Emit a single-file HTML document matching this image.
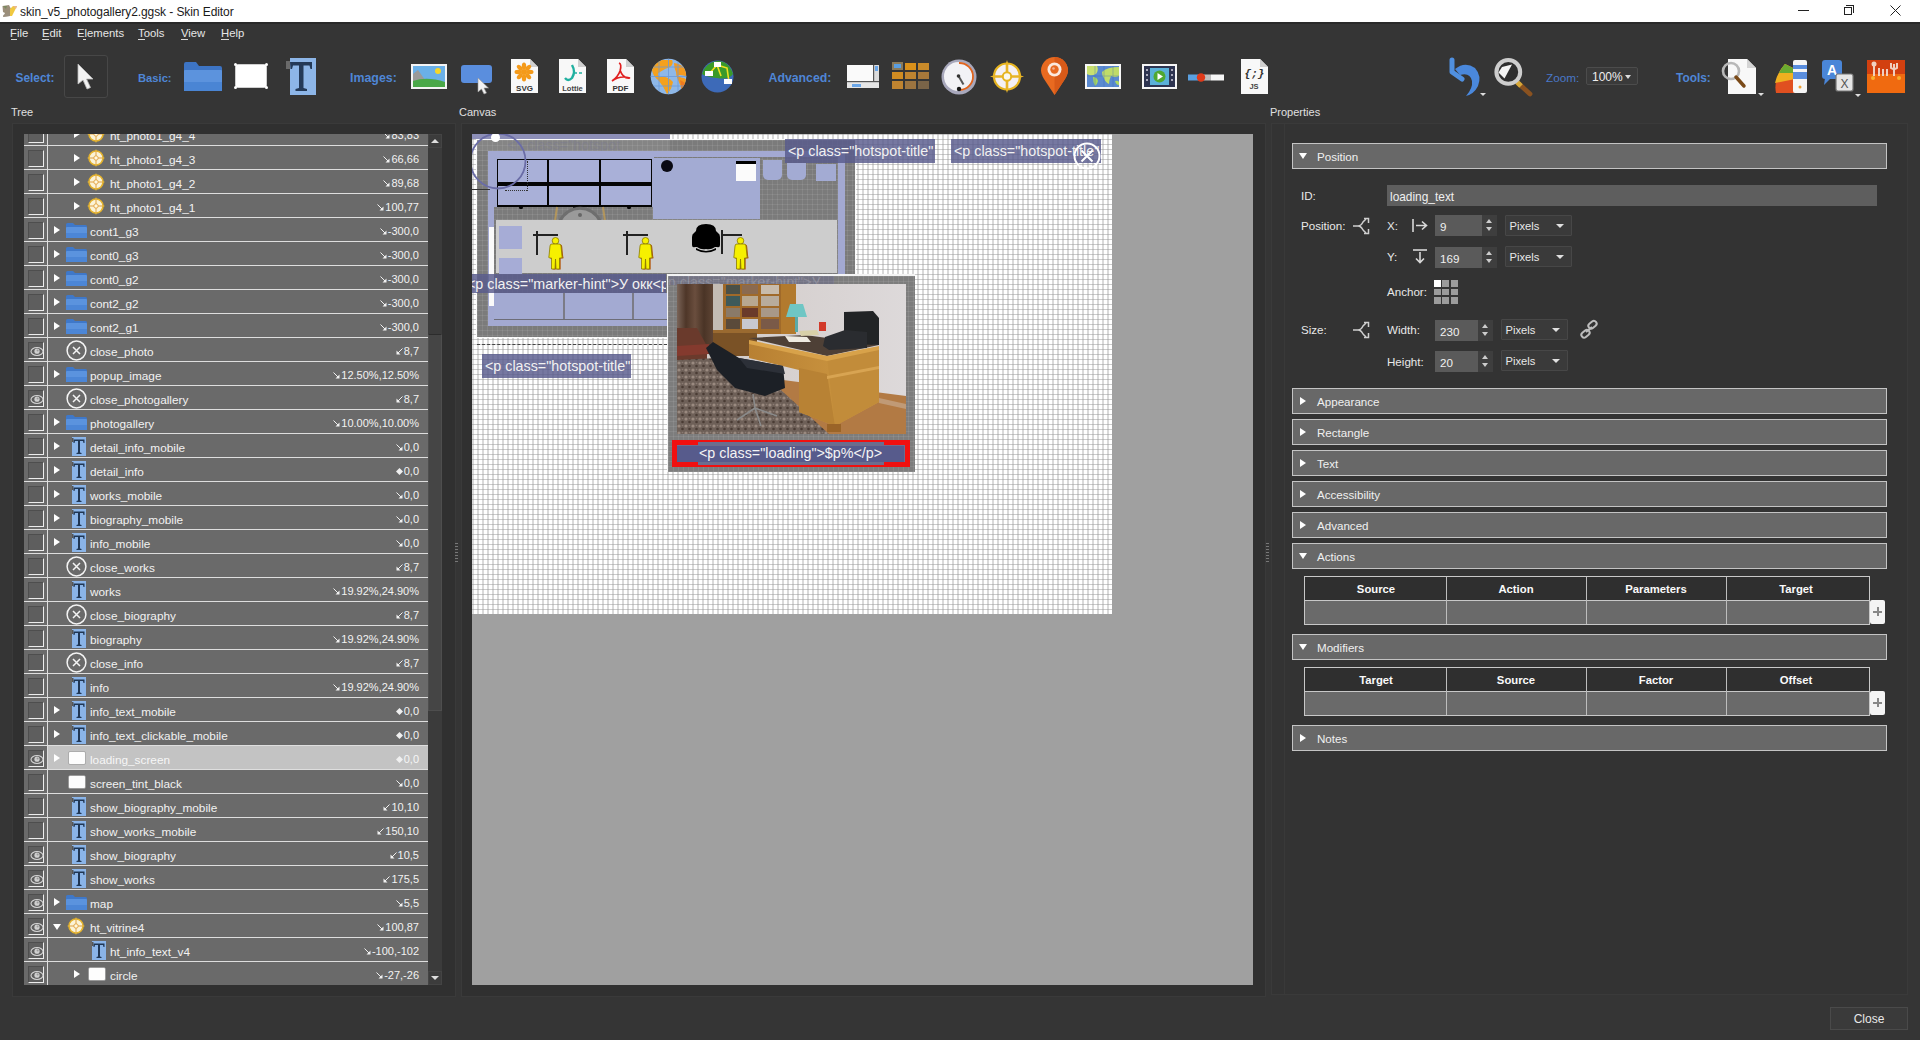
<!DOCTYPE html>
<html><head><meta charset="utf-8">
<style>
*{box-sizing:border-box;margin:0;padding:0}
html,body{width:1920px;height:1040px;overflow:hidden;background:#353535;font-family:"Liberation Sans",sans-serif;color:#e8e8e8}
.a{position:absolute}
svg.a{overflow:visible}
#title{left:0;top:0;width:1920px;height:22px;background:#fff;color:#1a1a1a;font-size:12px}
#menu{left:0;top:22px;width:1920px;height:22px;background:#353535;border-top:2px solid #292929;font-size:11.3px;color:#e6e6e6}
#menu span{position:absolute;top:3px}
#menu u{text-decoration:none;border-bottom:1px solid #e6e6e6;line-height:10px;display:inline-block}
.lbl{font-size:11px;color:#e0e0e0}
.tb{position:absolute;font-weight:bold;font-size:12.2px;color:#4f86d6;white-space:nowrap}
.frame{position:absolute;background:#303030;border:1px solid #3a3a3a}
/* tree */
#tree{left:24px;top:134px;width:404px;height:851px;overflow:hidden;background:#6a6a6a}
.row{position:absolute;left:0;width:404px;height:24px;border-bottom:1px solid #dedede;font-size:11.8px;color:#f2f2f2}
.row .cb{position:absolute;left:4px;top:4px;width:16px;height:16.5px;background:#5e5e5e;border-right:1.6px solid #ececec;border-bottom:1.6px solid #ececec;border-top:1.5px solid #4e4e4e;border-left:1.5px solid #4e4e4e}
.row .vl{position:absolute;left:23px;top:0;width:1px;height:24px;background:#dedede}
.row .t{position:absolute;top:7px;white-space:nowrap}
.row .v{position:absolute;right:9px;top:7px;white-space:nowrap;font-size:11px}
.row .ar{position:absolute;top:8px;width:0;height:0;border-top:4px solid transparent;border-bottom:4px solid transparent;border-left:6px solid #fff}
.row .ad{position:absolute;top:10px;width:0;height:0;border-left:4px solid transparent;border-right:4px solid transparent;border-top:6px solid #fff}
.row.sel{background:linear-gradient(90deg,#6a6a6a 24px,#c3c3c3 24px);color:#f6f6f6}
.sb{position:absolute;width:14px;height:14px;background:#3c3c3c;border:1px solid #444}
/* properties */
.hdr{position:absolute;left:1292px;width:595px;height:26px;background:#686868;border:1px solid #c4c4c4;font-size:11.6px;color:#f0f0f0}
.hdr span{position:absolute;left:24px;top:6px}
.hdr i{position:absolute;left:7px;top:8px;width:0;height:0;border-top:4px solid transparent;border-bottom:4px solid transparent;border-left:6px solid #fff}
.hdr i.d{left:6px;top:9px;border-left:4.5px solid transparent;border-right:4.5px solid transparent;border-top:6px solid #fff;border-bottom:0}
.pl{position:absolute;font-size:11.6px;color:#e8e8e8;white-space:nowrap}
.inp{position:absolute;background:#5a5a5a;height:21px;font-size:11.6px;color:#f0f0f0;padding:5px 0 0 5px;white-space:nowrap}
.spin{position:absolute;width:12px;height:21px;background:#444}
.combo{position:absolute;height:21px;background:#3a3a3a;border:1px solid #474747;font-size:11.2px;color:#e8e8e8;padding:4px 0 0 3.5px;border-radius:1px}
.combo:after{content:"";position:absolute;right:7px;top:8px;border-left:4px solid transparent;border-right:4px solid transparent;border-top:4px solid #e0e0e0}
.tbl{position:absolute;left:1304px;width:566px;height:49px;border:1px solid #c8c8c8;background:#6a6a6a}
.tbl .h{position:absolute;left:0;top:0;width:564px;height:24px;background:#2f2f2f;border-bottom:1px solid #c8c8c8}
.tbl .c{position:absolute;top:0;height:47px;width:1px;background:#bdbdbd}
.tbl .ht{position:absolute;top:6px;width:140px;text-align:center;font-weight:bold;font-size:11.3px;color:#fafafa}
.plus{position:absolute;left:1870px;width:15px;height:24px;background:#f4f4f4;border-radius:2px}
.plus:before{content:"";position:absolute;left:3px;top:11px;width:9px;height:1.5px;background:#888}
.plus:after{content:"";position:absolute;left:7px;top:7px;width:1.5px;height:9px;background:#888}
.hl{position:absolute;background:rgba(88,90,140,.82);color:#f2f2f2;font-size:14.3px;white-space:nowrap;overflow:hidden}
</style></head><body>
<div id="title" class="a">
  <svg class="a" style="left:1px;top:4px" width="17" height="14" viewBox="0 0 17 14"><path d="M1.5 2 L8 1 L10 5 L9 12 L2 13 L4 9 L2 8Z" fill="#8a7a62" opacity=".85"/><path d="M2 2 L6 2 L5 5Z" fill="#7a8a60"/><path d="M9 5 L12 2 L16 2 L11 12 L9 12Z" fill="#f0c840"/><path d="M12 2 L16 2 L15 5Z" fill="#e8b890"/><path d="M2 11 L8 9 L9 12 L2 13Z" fill="#9a9080" opacity=".7"/></svg>
  <span class="a" style="left:20px;top:5px;white-space:nowrap;letter-spacing:-0.08px">skin_v5_photogallery2.ggsk - Skin Editor</span>
  <div class="a" style="left:1798px;top:10px;width:11px;height:1px;background:#222"></div>
  <div class="a" style="left:1844px;top:7px;width:8px;height:8px;border:1px solid #222"></div>
  <div class="a" style="left:1846px;top:5px;width:8px;height:8px;border-top:1px solid #222;border-right:1px solid #222"></div>
  <svg class="a" style="left:1890px;top:5px" width="11" height="11" viewBox="0 0 11 11"><path d="M0.5 0.5 L10.5 10.5 M10.5 0.5 L0.5 10.5" stroke="#222" stroke-width="1"/></svg>
</div>
<div id="menu" class="a">
  <span style="left:10px">File</span><span style="left:42px">Edit</span><span style="left:77px">Elements</span><span style="left:138px">Tools</span><span style="left:181px">View</span><span style="left:221px">Help</span><div class="a" style="left:11px;top:15px;width:6px;height:1px;background:#d8d8d8"></div><div class="a" style="left:42px;top:15px;width:7px;height:1px;background:#d8d8d8"></div><div class="a" style="left:83px;top:15px;width:3px;height:1px;background:#d8d8d8"></div><div class="a" style="left:138px;top:15px;width:7px;height:1px;background:#d8d8d8"></div><div class="a" style="left:181px;top:15px;width:7px;height:1px;background:#d8d8d8"></div><div class="a" style="left:221px;top:15px;width:8px;height:1px;background:#d8d8d8"></div>
</div>

<div class="tb" style="left:15.5px;top:71px;font-size:11.9px">Select:</div>
<div class="a" style="left:64px;top:55px;width:44px;height:43px;border:1px solid #474747;border-radius:3px;background:#333"></div>
<svg class="a" style="left:77px;top:63px" width="20" height="28" viewBox="0 0 20 28"><path d="M1 1 L1 21 L6 17 L10 26 L13.5 24.5 L9.5 16 L16 16Z" fill="#f2f2f2" stroke="#bbb" stroke-width=".8"/></svg>
<div class="tb" style="left:138px;top:71.5px;font-size:11.2px">Basic:</div>
<svg class="a" style="left:184px;top:62px" width="38" height="29" viewBox="0 0 38 29"><path d="M0 2 Q0 0 2 0 H12 L15 4 H36 Q38 4 38 6 V27 Q38 29 36 29 H2 Q0 29 0 27Z" fill="#3d74c4"/><rect x="0" y="8" width="38" height="21" rx="1" fill="#5c93dd"/><rect x="0" y="20" width="38" height="9" fill="#4a85d4"/></svg>
<svg class="a" style="left:234px;top:63px" width="34" height="26" viewBox="0 0 34 26"><rect x="1.5" y="1.5" width="31" height="23" rx="2" fill="#fff" stroke="#ddd" stroke-width=".8"/><circle cx="1.5" cy="1.5" r="1.5" fill="#fff"/><circle cx="32.5" cy="1.5" r="1.5" fill="#fff"/><circle cx="1.5" cy="24.5" r="1.5" fill="#fff"/><circle cx="32.5" cy="24.5" r="1.5" fill="#fff"/></svg>
<svg class="a" style="left:286px;top:58px" width="30" height="37" viewBox="0 0 30 37"><rect x="4" y="0" width="26" height="37" fill="#8db6e8"/><rect x="0" y="3" width="4" height="8" fill="#6a6a6a"/><path d="M4 4 H26 V11 H24.5 L23.5 7.5 H17.5 V30 L21 31 V33 H9.5 V31 L13 30 V7.5 H7 L6 11 H4.5Z" fill="#243a58"/></svg>
<div class="tb" style="left:350px;top:71px;font-size:12.4px">Images:</div>
<svg class="a" style="left:411px;top:64px" width="36" height="25" viewBox="0 0 36 25"><rect x="0" y="0" width="36" height="25" fill="#f4f4f4"/><rect x="2" y="2" width="32" height="21" fill="#6ab0e8"/><circle cx="27" cy="7" r="3" fill="#f6d628"/><path d="M2 10 L7 6 L14 16 L2 20Z" fill="#9a9a9a"/><path d="M2 17 Q16 12 34 18 L34 23 L2 23Z" fill="#4aa848"/></svg>
<svg class="a" style="left:461px;top:65px" width="33" height="29" viewBox="0 0 33 29"><rect x="0" y="0" width="31" height="18" rx="3" fill="#5a8ede"/><path d="M17 13 L17 27 L20.5 24 L23 29 L25.5 28 L23 23 L27.5 23Z" fill="#f2f2f2" stroke="#999" stroke-width=".6"/></svg>
<svg class="a" style="left:510px;top:58px" width="29" height="36" viewBox="0 0 29 36"><path d="M1 1 H20 L28 9 V35 H1Z" fill="#f8f8f8"/><path d="M20 1 L28 9 H20Z" fill="#cfcfcf"/><g transform="translate(14 14)"><circle r="3" fill="#f49a1a"/><g fill="#f49a1a"><ellipse cx="0" cy="-6" rx="2.2" ry="3.5"/><ellipse cx="0" cy="6" rx="2.2" ry="3.5"/><ellipse cx="-6" cy="0" rx="3.5" ry="2.2"/><ellipse cx="6" cy="0" rx="3.5" ry="2.2"/><ellipse cx="4.2" cy="4.2" rx="2.2" ry="3.5" transform="rotate(-45 4.2 4.2)"/><ellipse cx="-4.2" cy="-4.2" rx="2.2" ry="3.5" transform="rotate(-45 -4.2 -4.2)"/><ellipse cx="4.2" cy="-4.2" rx="2.2" ry="3.5" transform="rotate(45 4.2 -4.2)"/><ellipse cx="-4.2" cy="4.2" rx="2.2" ry="3.5" transform="rotate(45 -4.2 4.2)"/></g></g><text x="14.5" y="33" font-size="8" font-weight="bold" text-anchor="middle" fill="#333" font-family="Liberation Sans">SVG</text></svg>
<svg class="a" style="left:558px;top:58px" width="29" height="36" viewBox="0 0 29 36"><path d="M1 1 H20 L28 9 V35 H1Z" fill="#f8f8f8"/><path d="M20 1 L28 9 H20Z" fill="#cfcfcf"/><path d="M14 7 Q18 14 14 20 Q10 24 7 20" fill="none" stroke="#20b0a0" stroke-width="2.4"/><path d="M16 15 H26" stroke="#20b0a0" stroke-width="1.6" stroke-dasharray="3 2"/><text x="14.5" y="33" font-size="7.5" font-weight="bold" text-anchor="middle" fill="#444" font-family="Liberation Sans">Lottie</text></svg>
<svg class="a" style="left:606px;top:58px" width="29" height="36" viewBox="0 0 29 36"><path d="M1 1 H20 L28 9 V35 H1Z" fill="#f8f8f8"/><path d="M20 1 L28 9 H20Z" fill="#cfcfcf"/><path d="M13 5 Q16 6 14 13 Q12 19 6 23 Q14 17 24 20 Q17 21 14 12" fill="none" stroke="#e02020" stroke-width="1.7"/><text x="14.5" y="33" font-size="8" font-weight="bold" text-anchor="middle" fill="#333" font-family="Liberation Sans">PDF</text></svg>
<svg class="a" style="left:650px;top:58px" width="37" height="37" viewBox="0 0 37 37"><defs><clipPath id="gc"><circle cx="18.5" cy="18.5" r="17.8"/></clipPath></defs><circle cx="18.5" cy="18.5" r="17.8" fill="#8fb8e8"/><g clip-path="url(#gc)"><path d="M2 12 Q4 4 12 2 L22 2 Q24 6 20 9 Q14 11 10 14 Q6 16 10 19 Q18 18 23 24 Q22 30 19 34 L17 36 Q12 26 8 22 Q3 18 2 12Z" fill="#f4a21e"/><path d="M24 5 Q32 6 36 12 L36 18 Q32 17 28 17 Q30 20 34 20 L37 22 L37 30 Q34 34 32 33 Q30 26 28 22 Q26 18 26 14 Q24 10 24 5Z" fill="#f49a20"/><path d="M30 22 Q34 24 36 26 L35 32 L32 33Z" fill="#ee7a22"/><path d="M0 18.5 H37 M18.5 0 V37 M0 9 H37 M0 28 H37 M9 0 V37 M28 0 V37" stroke="#6a98d8" stroke-width=".9" opacity=".85"/></g></svg>
<svg class="a" style="left:701px;top:60px" width="33" height="33" viewBox="0 0 33 33"><circle cx="16.5" cy="16.5" r="16" fill="#3d6ab8"/><path d="M1 14 Q4 3 16 1 Q28 1 32 14 Q28 20 16 18 Q6 17 1 14Z" fill="#3a9a2a"/><path d="M8 14 L16 5 L26 8 L28 22" stroke="#f0e020" stroke-width="1.6" fill="none"/><path d="M16 5 L20 16" stroke="#f0e020" stroke-width="1.6"/><rect x="13" y="2" width="7" height="5" fill="#fff"/><rect x="4" y="11" width="8" height="5" fill="#fff"/><rect x="23" y="19" width="8" height="5" fill="#fff"/></svg>
<div class="tb" style="left:768.5px;top:71px;font-size:12.3px">Advanced:</div>
<svg class="a" style="left:847px;top:65px" width="32" height="23" viewBox="0 0 32 23"><rect x="0" y="0" width="32" height="23" fill="#fafafa"/><rect x="27" y="0" width="5" height="17" fill="#dcdcdc"/><rect x="28" y="1" width="3" height="5" fill="#6aa6e8"/><rect x="0" y="17" width="32" height="6" fill="#e6e6e6"/><rect x="5" y="19" width="9" height="3" fill="#6aa6e8"/><rect x="0" y="16" width="32" height="1.2" fill="#555"/><rect x="26" y="0" width="1.2" height="17" fill="#555"/></svg>
<svg class="a" style="left:892px;top:62px" width="37" height="27" viewBox="0 0 37 27"><rect x="0" y="0" width="11" height="8" fill="#8a7a5a"/><rect x="2" y="2" width="7" height="4" fill="#5a9ee0"/><rect x="13" y="1" width="11" height="7" fill="#d9901a"/><rect x="26" y="1" width="11" height="7" fill="#c88a2a"/><rect x="0" y="10" width="11" height="7" fill="#d08c22"/><rect x="13" y="10" width="11" height="7" fill="#bf8430"/><rect x="26" y="10" width="11" height="7" fill="#a8783a"/><rect x="0" y="19" width="11" height="8" fill="#c08430"/><rect x="13" y="19" width="11" height="8" fill="#9c7440"/><rect x="26" y="19" width="11" height="8" fill="#7a6448"/></svg>
<svg class="a" style="left:941px;top:59px" width="36" height="36" viewBox="0 0 36 36"><circle cx="18" cy="18" r="17.5" fill="#a8a8bc"/><circle cx="17.5" cy="17.5" r="14.5" fill="#f2f2f6"/><path d="M18 4 A13.5 13.5 0 0 1 19 31" fill="none" stroke="#e0641e" stroke-width="1.8"/><path d="M17.5 17 L22.5 25.5" stroke="#555" stroke-width="2"/><circle cx="17.5" cy="17" r="1.8" fill="#333"/><circle cx="18" cy="30" r="2.2" fill="#1a1a1a"/></svg>
<svg class="a" style="left:989px;top:59px" width="36" height="35" viewBox="0 0 36 35"><circle cx="18" cy="17.5" r="13" fill="#f4f0f4" stroke="#e6b420" stroke-width="2.2"/><path d="M18 1 L19.3 5 V30 L18 34 L16.7 30 V5Z M1 17.5 L5 16.2 H31 L35 17.5 L31 18.8 H5Z" fill="#e8b428"/><circle cx="18" cy="17.5" r="4.2" fill="#fbf8ee" stroke="#e6b420" stroke-width="2"/></svg>
<svg class="a" style="left:1041px;top:57px" width="27" height="38" viewBox="0 0 27 38"><path d="M13.5 38 L3 22 Q0 17 0 13.5 A13.5 13.5 0 0 1 27 13.5 Q27 17 24 22Z" fill="#e86a20"/><path d="M13.5 38 L13.5 0 A13.5 13.5 0 0 1 27 13.5 Q27 17 24 22Z" fill="#d85a18"/><circle cx="13.5" cy="12.5" r="7" fill="#fbe9dd"/><circle cx="13.5" cy="12.5" r="4.2" fill="#e86a20"/><circle cx="12.5" cy="11.5" r="1.3" fill="#f3b090"/></svg>
<svg class="a" style="left:1085px;top:64px" width="36" height="25" viewBox="0 0 36 25"><rect width="36" height="25" fill="#f8f8f8"/><rect x="2" y="2" width="32" height="21" fill="#5a8ad0"/><path d="M2 2 H12 Q14 6 11 10 Q7 12 4 11 L2 10Z" fill="#c8e070"/><path d="M8 13 Q12 13 13 17 Q12 21 10 22 Q8 18 8 13Z" fill="#a8d860"/><path d="M17 8 Q22 3 34 3 L34 12 Q30 14 26 12 Q24 16 24 20 Q20 18 19 14 Q17 12 17 8Z" fill="#c0dc68"/><path d="M30 17 Q33 16 34 18 L34 21 Q31 21 30 17Z" fill="#b0d860"/><path d="M2 12 H34 M10 2 V23 M19 2 V23 M28 2 V23" stroke="#3a68b8" stroke-width=".7" opacity=".5"/></svg>
<svg class="a" style="left:1142px;top:64px" width="35" height="25" viewBox="0 0 35 25"><rect width="35" height="25" fill="#f6f6f6"/><rect x="2" y="2" width="31" height="21" fill="#2e3450"/><rect x="8" y="4" width="19" height="17" fill="#5ab0d8"/><circle cx="17.5" cy="12.5" r="6" fill="#50a830"/><path d="M15.5 9 L21 12.5 L15.5 16Z" fill="#fff"/><g fill="#aab"><rect x="4" y="5" width="2" height="2"/><rect x="4" y="10" width="2" height="2"/><rect x="4" y="15" width="2" height="2"/><rect x="29" y="5" width="2" height="2"/><rect x="29" y="10" width="2" height="2"/><rect x="29" y="15" width="2" height="2"/></g></svg>
<svg class="a" style="left:1188px;top:73px" width="36" height="9" viewBox="0 0 36 9"><rect x="0" y="1.5" width="13" height="6" fill="#5aa0e0"/><rect x="13" y="1.5" width="10" height="6" fill="#bdbdbd"/><rect x="23" y="1.5" width="13" height="6" fill="#f6f6f6"/><circle cx="13" cy="4.5" r="4.2" fill="#e03a1a"/></svg>
<svg class="a" style="left:1240px;top:58px" width="29" height="37" viewBox="0 0 29 37"><path d="M1 1 H20 L28 9 V36 H1Z" fill="#f8f8f8"/><path d="M20 1 L28 9 H20Z" fill="#cfcfcf"/><text x="14.5" y="19" font-size="11" font-weight="bold" font-style="italic" text-anchor="middle" fill="#333" font-family="Liberation Mono">{;}</text><text x="14" y="31" font-size="7.5" font-weight="bold" text-anchor="middle" fill="#444" font-family="Liberation Sans">JS</text></svg>
<!-- right tools -->
<svg class="a" style="left:1440px;top:52px" width="50" height="48" viewBox="0 0 50 48"><path d="M15 17 Q25 9 35 16 Q42 24 38 34 Q34 42 26 44 Q33 36 32 29 Q30 20 20 23Z" fill="#4a88dc"/><path d="M12 8 V20 L22 27" stroke="#5090e0" stroke-width="5" stroke-linecap="round" stroke-linejoin="round" fill="none"/><path d="M40 41 H46 L43 44Z" fill="#ddd"/></svg>
<svg class="a" style="left:1488px;top:52px" width="50" height="48" viewBox="0 0 50 48"><path d="M31 32 L42 42" stroke="#8a5220" stroke-width="4.8" stroke-linecap="round"/><path d="M29 30 L33 34" stroke="#d8a838" stroke-width="5"/><circle cx="20.3" cy="19.9" r="11.9" fill="#2e2e2e" stroke="#cdcdcd" stroke-width="4"/><path d="M10.5 20.5 L14 15 L24 12.5 L16.5 26.5Z" fill="#f4f4f4"/></svg>
<div class="tb" style="left:1546px;top:71px;font-weight:normal;font-size:11.7px;color:#4a78c8">Zoom:</div>
<div class="a" style="left:1586px;top:67px;width:52px;height:18px;background:#3a3a3a;border:1px solid #4c4c4c;border-radius:2px;font-size:12px;color:#eee;padding:2px 0 0 5px">100%<div class="a" style="left:38px;top:7px;border-left:3.5px solid transparent;border-right:3.5px solid transparent;border-top:4px solid #ddd"></div></div>
<div class="tb" style="left:1676px;top:71px;font-size:11.9px">Tools:</div>
<svg class="a" style="left:1721px;top:59px" width="44" height="36" viewBox="0 0 44 36"><path d="M7 0 H26 L35 9 V35 H7Z" fill="#f8f8f8"/><path d="M26 0 L35 9 H26Z" fill="#d4d4d4"/><circle cx="10" cy="12" r="8" fill="none" stroke="#b8b8b8" stroke-width="2.6"/><path d="M15 18 L23 27" stroke="#7a4a18" stroke-width="3.5" stroke-linecap="round"/><path d="M37 34 H43 L40 37Z" fill="#ddd"/></svg>
<svg class="a" style="left:1773px;top:59px" width="35" height="35" viewBox="0 0 35 35"><path d="M3 34 Q0 20 12 5 L22 10 L22 34Z" fill="#e05020"/><path d="M2 24 Q4 14 12 5 L22 10 L22 20Z" fill="#f0b020"/><path d="M6 14 Q9 8 12 5 L22 10 L22 14Z" fill="#6aaa30"/><rect x="20" y="1" width="14" height="33" rx="2" fill="#f6f6f6"/><rect x="20" y="6" width="14" height="4" fill="#5a8ede"/><rect x="20" y="13" width="14" height="7" fill="#5a8ede"/><circle cx="27" cy="28" r="1.5" fill="#f0a030"/></svg>
<svg class="a" style="left:1822px;top:60px" width="38" height="36" viewBox="0 0 38 36"><rect x="0" y="0" width="20" height="19" rx="3" fill="#4a86d8"/><path d="M3 18 L2 25 L9 18Z" fill="#4a86d8"/><text x="10" y="15" font-size="14" font-weight="bold" text-anchor="middle" fill="#fff" font-family="Liberation Sans">A</text><rect x="14" y="14" width="17" height="17" rx="2" fill="#e6e6e6" stroke="#777" stroke-width="1.2"/><text x="22.5" y="28" font-size="12" text-anchor="middle" fill="#555" font-family="Liberation Sans">X</text><path d="M33 34 H39 L36 37Z" fill="#ddd"/></svg>
<svg class="a" style="left:1867px;top:60px" width="38" height="33" viewBox="0 0 38 33"><rect x="0" y="0" width="38" height="33" fill="#d24010"/><rect x="0" y="14" width="38" height="19" fill="#f06a10"/><path d="M7 4 V16 M12 8 V16 M16 9 V16 M20 9 V16 M27 4 V16" stroke="#f0d0c0" stroke-width="2"/><path d="M24 3 L24 8 Q27 10 30 8 L30 3" fill="none" stroke="#f0d0c0" stroke-width="2"/><circle cx="7" cy="4" r="2.5" fill="#f0d0c0"/><circle cx="6" cy="18" r="2" fill="#f8b030"/><circle cx="32" cy="18" r="2" fill="#f8b030"/></svg>


<div class="a lbl" style="left:11px;top:106px">Tree</div>
<div class="a lbl" style="left:459px;top:106px">Canvas</div>
<div class="a lbl" style="left:1270px;top:106px">Properties</div>

<div class="frame" style="left:12px;top:123px;width:444px;height:874px"></div>
<div class="frame" style="left:461px;top:123px;width:805px;height:874px"></div>
<div class="frame" style="left:1271px;top:123px;width:637px;height:872px;background:#333"></div><div class="a" style="left:1284px;top:124px;width:1px;height:870px;background:#393939"></div>

<div id="tree" class="a">
<div class="row" style="top:-12px"><div class="cb"></div><div class="vl"></div><div class="ar" style="left:50px"></div><svg class="a" style="left:62px;top:2px" width="20" height="20" viewBox="0 0 20 20"><path d="M10 1 L12 6 L10 5 L8 6Z M10 19 L12 14 L10 15 L8 14Z M1 10 L6 8 L5 10 L6 12Z M19 10 L14 8 L15 10 L14 12Z" fill="#e8c040"/><circle cx="10" cy="10" r="7" fill="#fbf3d8" stroke="#e4b22c" stroke-width="1.6"/><path d="M10 3.5 V16.5 M3.5 10 H16.5" stroke="#e0a040" stroke-width="1"/><circle cx="10" cy="10" r="2.2" fill="#fff8e0" stroke="#e0a040" stroke-width=".9"/></svg><div class="t" style="left:86px">ht_photo1_g4_4</div><div class="v"><svg width="7" height="7" viewBox="0 0 7 7" style="margin-right:1px;vertical-align:0px"><path d="M0.5 0.5 L6 6" stroke="#f0f0f0" stroke-width="1"/><path d="M6.5 2.5 V6.5 H2.5Z" fill="#f0f0f0"/></svg>83,83</div></div>
<div class="row" style="top:12px"><div class="cb"></div><div class="vl"></div><div class="ar" style="left:50px"></div><svg class="a" style="left:62px;top:2px" width="20" height="20" viewBox="0 0 20 20"><path d="M10 1 L12 6 L10 5 L8 6Z M10 19 L12 14 L10 15 L8 14Z M1 10 L6 8 L5 10 L6 12Z M19 10 L14 8 L15 10 L14 12Z" fill="#e8c040"/><circle cx="10" cy="10" r="7" fill="#fbf3d8" stroke="#e4b22c" stroke-width="1.6"/><path d="M10 3.5 V16.5 M3.5 10 H16.5" stroke="#e0a040" stroke-width="1"/><circle cx="10" cy="10" r="2.2" fill="#fff8e0" stroke="#e0a040" stroke-width=".9"/></svg><div class="t" style="left:86px">ht_photo1_g4_3</div><div class="v"><svg width="7" height="7" viewBox="0 0 7 7" style="margin-right:1px;vertical-align:0px"><path d="M0.5 0.5 L6 6" stroke="#f0f0f0" stroke-width="1"/><path d="M6.5 2.5 V6.5 H2.5Z" fill="#f0f0f0"/></svg>66,66</div></div>
<div class="row" style="top:36px"><div class="cb"></div><div class="vl"></div><div class="ar" style="left:50px"></div><svg class="a" style="left:62px;top:2px" width="20" height="20" viewBox="0 0 20 20"><path d="M10 1 L12 6 L10 5 L8 6Z M10 19 L12 14 L10 15 L8 14Z M1 10 L6 8 L5 10 L6 12Z M19 10 L14 8 L15 10 L14 12Z" fill="#e8c040"/><circle cx="10" cy="10" r="7" fill="#fbf3d8" stroke="#e4b22c" stroke-width="1.6"/><path d="M10 3.5 V16.5 M3.5 10 H16.5" stroke="#e0a040" stroke-width="1"/><circle cx="10" cy="10" r="2.2" fill="#fff8e0" stroke="#e0a040" stroke-width=".9"/></svg><div class="t" style="left:86px">ht_photo1_g4_2</div><div class="v"><svg width="7" height="7" viewBox="0 0 7 7" style="margin-right:1px;vertical-align:0px"><path d="M0.5 0.5 L6 6" stroke="#f0f0f0" stroke-width="1"/><path d="M6.5 2.5 V6.5 H2.5Z" fill="#f0f0f0"/></svg>89,68</div></div>
<div class="row" style="top:60px"><div class="cb"></div><div class="vl"></div><div class="ar" style="left:50px"></div><svg class="a" style="left:62px;top:2px" width="20" height="20" viewBox="0 0 20 20"><path d="M10 1 L12 6 L10 5 L8 6Z M10 19 L12 14 L10 15 L8 14Z M1 10 L6 8 L5 10 L6 12Z M19 10 L14 8 L15 10 L14 12Z" fill="#e8c040"/><circle cx="10" cy="10" r="7" fill="#fbf3d8" stroke="#e4b22c" stroke-width="1.6"/><path d="M10 3.5 V16.5 M3.5 10 H16.5" stroke="#e0a040" stroke-width="1"/><circle cx="10" cy="10" r="2.2" fill="#fff8e0" stroke="#e0a040" stroke-width=".9"/></svg><div class="t" style="left:86px">ht_photo1_g4_1</div><div class="v"><svg width="7" height="7" viewBox="0 0 7 7" style="margin-right:1px;vertical-align:0px"><path d="M0.5 0.5 L6 6" stroke="#f0f0f0" stroke-width="1"/><path d="M6.5 2.5 V6.5 H2.5Z" fill="#f0f0f0"/></svg>100,77</div></div>
<div class="row" style="top:84px"><div class="cb"></div><div class="vl"></div><div class="ar" style="left:30px"></div><svg class="a" style="left:42px;top:5px" width="21" height="15" viewBox="0 0 21 15"><path d="M0 1.5 Q0 0 1.5 0 H7 L9 2 H19.5 Q21 2 21 3.5 V13.5 Q21 15 19.5 15 H1.5 Q0 15 0 13.5Z" fill="#3f78c9"/><rect x="0" y="4" width="21" height="11" rx="1" fill="#5b93de"/><rect x="0" y="10" width="21" height="5" fill="#4c86d6"/></svg><div class="t" style="left:66px">cont1_g3</div><div class="v"><svg width="7" height="7" viewBox="0 0 7 7" style="margin-right:1px;vertical-align:0px"><path d="M0.5 0.5 L6 6" stroke="#f0f0f0" stroke-width="1"/><path d="M6.5 2.5 V6.5 H2.5Z" fill="#f0f0f0"/></svg>-300,0</div></div>
<div class="row" style="top:108px"><div class="cb"></div><div class="vl"></div><div class="ar" style="left:30px"></div><svg class="a" style="left:42px;top:5px" width="21" height="15" viewBox="0 0 21 15"><path d="M0 1.5 Q0 0 1.5 0 H7 L9 2 H19.5 Q21 2 21 3.5 V13.5 Q21 15 19.5 15 H1.5 Q0 15 0 13.5Z" fill="#3f78c9"/><rect x="0" y="4" width="21" height="11" rx="1" fill="#5b93de"/><rect x="0" y="10" width="21" height="5" fill="#4c86d6"/></svg><div class="t" style="left:66px">cont0_g3</div><div class="v"><svg width="7" height="7" viewBox="0 0 7 7" style="margin-right:1px;vertical-align:0px"><path d="M0.5 0.5 L6 6" stroke="#f0f0f0" stroke-width="1"/><path d="M6.5 2.5 V6.5 H2.5Z" fill="#f0f0f0"/></svg>-300,0</div></div>
<div class="row" style="top:132px"><div class="cb"></div><div class="vl"></div><div class="ar" style="left:30px"></div><svg class="a" style="left:42px;top:5px" width="21" height="15" viewBox="0 0 21 15"><path d="M0 1.5 Q0 0 1.5 0 H7 L9 2 H19.5 Q21 2 21 3.5 V13.5 Q21 15 19.5 15 H1.5 Q0 15 0 13.5Z" fill="#3f78c9"/><rect x="0" y="4" width="21" height="11" rx="1" fill="#5b93de"/><rect x="0" y="10" width="21" height="5" fill="#4c86d6"/></svg><div class="t" style="left:66px">cont0_g2</div><div class="v"><svg width="7" height="7" viewBox="0 0 7 7" style="margin-right:1px;vertical-align:0px"><path d="M0.5 0.5 L6 6" stroke="#f0f0f0" stroke-width="1"/><path d="M6.5 2.5 V6.5 H2.5Z" fill="#f0f0f0"/></svg>-300,0</div></div>
<div class="row" style="top:156px"><div class="cb"></div><div class="vl"></div><div class="ar" style="left:30px"></div><svg class="a" style="left:42px;top:5px" width="21" height="15" viewBox="0 0 21 15"><path d="M0 1.5 Q0 0 1.5 0 H7 L9 2 H19.5 Q21 2 21 3.5 V13.5 Q21 15 19.5 15 H1.5 Q0 15 0 13.5Z" fill="#3f78c9"/><rect x="0" y="4" width="21" height="11" rx="1" fill="#5b93de"/><rect x="0" y="10" width="21" height="5" fill="#4c86d6"/></svg><div class="t" style="left:66px">cont2_g2</div><div class="v"><svg width="7" height="7" viewBox="0 0 7 7" style="margin-right:1px;vertical-align:0px"><path d="M0.5 0.5 L6 6" stroke="#f0f0f0" stroke-width="1"/><path d="M6.5 2.5 V6.5 H2.5Z" fill="#f0f0f0"/></svg>-300,0</div></div>
<div class="row" style="top:180px"><div class="cb"></div><div class="vl"></div><div class="ar" style="left:30px"></div><svg class="a" style="left:42px;top:5px" width="21" height="15" viewBox="0 0 21 15"><path d="M0 1.5 Q0 0 1.5 0 H7 L9 2 H19.5 Q21 2 21 3.5 V13.5 Q21 15 19.5 15 H1.5 Q0 15 0 13.5Z" fill="#3f78c9"/><rect x="0" y="4" width="21" height="11" rx="1" fill="#5b93de"/><rect x="0" y="10" width="21" height="5" fill="#4c86d6"/></svg><div class="t" style="left:66px">cont2_g1</div><div class="v"><svg width="7" height="7" viewBox="0 0 7 7" style="margin-right:1px;vertical-align:0px"><path d="M0.5 0.5 L6 6" stroke="#f0f0f0" stroke-width="1"/><path d="M6.5 2.5 V6.5 H2.5Z" fill="#f0f0f0"/></svg>-300,0</div></div>
<div class="row" style="top:204px"><div class="cb"><svg class="a" style="left:0.5px;top:2.5px" width="14" height="11" viewBox="0 0 14 11"><ellipse cx="7" cy="5.5" rx="6" ry="4" fill="none" stroke="#d4d4d4" stroke-width="1.1"/><circle cx="7" cy="5.2" r="2.6" fill="#cfcfcf"/><circle cx="7.6" cy="4.6" r="1" fill="#9a9a9a"/></svg></div><div class="vl"></div><svg class="a" style="left:42px;top:2px" width="21" height="21" viewBox="0 0 21 21"><circle cx="10.5" cy="10.5" r="9.4" fill="none" stroke="#f4f4f4" stroke-width="1.5"/><path d="M7 7 L14 14 M14 7 L7 14" stroke="#f4f4f4" stroke-width="1.5"/></svg><div class="t" style="left:66px">close_photo</div><div class="v"><svg width="7" height="7" viewBox="0 0 7 7" style="margin-right:1px;vertical-align:0px"><path d="M6.5 0.5 L1 6" stroke="#f0f0f0" stroke-width="1"/><path d="M0.5 2.5 V6.5 H4.5Z" fill="#f0f0f0"/></svg>8,7</div></div>
<div class="row" style="top:228px"><div class="cb"></div><div class="vl"></div><div class="ar" style="left:30px"></div><svg class="a" style="left:42px;top:5px" width="21" height="15" viewBox="0 0 21 15"><path d="M0 1.5 Q0 0 1.5 0 H7 L9 2 H19.5 Q21 2 21 3.5 V13.5 Q21 15 19.5 15 H1.5 Q0 15 0 13.5Z" fill="#3f78c9"/><rect x="0" y="4" width="21" height="11" rx="1" fill="#5b93de"/><rect x="0" y="10" width="21" height="5" fill="#4c86d6"/></svg><div class="t" style="left:66px">popup_image</div><div class="v"><svg width="7" height="7" viewBox="0 0 7 7" style="margin-right:1px;vertical-align:0px"><path d="M0.5 0.5 L6 6" stroke="#f0f0f0" stroke-width="1"/><path d="M6.5 2.5 V6.5 H2.5Z" fill="#f0f0f0"/></svg>12.50%,12.50%</div></div>
<div class="row" style="top:252px"><div class="cb"><svg class="a" style="left:0.5px;top:2.5px" width="14" height="11" viewBox="0 0 14 11"><ellipse cx="7" cy="5.5" rx="6" ry="4" fill="none" stroke="#d4d4d4" stroke-width="1.1"/><circle cx="7" cy="5.2" r="2.6" fill="#cfcfcf"/><circle cx="7.6" cy="4.6" r="1" fill="#9a9a9a"/></svg></div><div class="vl"></div><svg class="a" style="left:42px;top:2px" width="21" height="21" viewBox="0 0 21 21"><circle cx="10.5" cy="10.5" r="9.4" fill="none" stroke="#f4f4f4" stroke-width="1.5"/><path d="M7 7 L14 14 M14 7 L7 14" stroke="#f4f4f4" stroke-width="1.5"/></svg><div class="t" style="left:66px">close_photogallery</div><div class="v"><svg width="7" height="7" viewBox="0 0 7 7" style="margin-right:1px;vertical-align:0px"><path d="M6.5 0.5 L1 6" stroke="#f0f0f0" stroke-width="1"/><path d="M0.5 2.5 V6.5 H4.5Z" fill="#f0f0f0"/></svg>8,7</div></div>
<div class="row" style="top:276px"><div class="cb"></div><div class="vl"></div><div class="ar" style="left:30px"></div><svg class="a" style="left:42px;top:5px" width="21" height="15" viewBox="0 0 21 15"><path d="M0 1.5 Q0 0 1.5 0 H7 L9 2 H19.5 Q21 2 21 3.5 V13.5 Q21 15 19.5 15 H1.5 Q0 15 0 13.5Z" fill="#3f78c9"/><rect x="0" y="4" width="21" height="11" rx="1" fill="#5b93de"/><rect x="0" y="10" width="21" height="5" fill="#4c86d6"/></svg><div class="t" style="left:66px">photogallery</div><div class="v"><svg width="7" height="7" viewBox="0 0 7 7" style="margin-right:1px;vertical-align:0px"><path d="M0.5 0.5 L6 6" stroke="#f0f0f0" stroke-width="1"/><path d="M6.5 2.5 V6.5 H2.5Z" fill="#f0f0f0"/></svg>10.00%,10.00%</div></div>
<div class="row" style="top:300px"><div class="cb"></div><div class="vl"></div><div class="ar" style="left:30px"></div><svg class="a" style="left:48px;top:3px" width="14" height="19" viewBox="0 0 14 19"><rect width="14" height="19" fill="#8ab4e8"/><path d="M1.5 2.5 H12.5 V6 H11.5 L11 4 H8 V15.5 L9.5 16 V17 H4.5 V16 L6 15.5 V4 H3 L2.5 6 H1.5Z" fill="#1f3654"/><rect x="0" y="1" width="1.5" height="4" fill="#555"/></svg><div class="t" style="left:66px">detail_info_mobile</div><div class="v"><svg width="7" height="7" viewBox="0 0 7 7" style="margin-right:1px;vertical-align:0px"><path d="M0.5 0.5 L6 6" stroke="#f0f0f0" stroke-width="1"/><path d="M6.5 2.5 V6.5 H2.5Z" fill="#f0f0f0"/></svg>0,0</div></div>
<div class="row" style="top:324px"><div class="cb"></div><div class="vl"></div><div class="ar" style="left:30px"></div><svg class="a" style="left:48px;top:3px" width="14" height="19" viewBox="0 0 14 19"><rect width="14" height="19" fill="#8ab4e8"/><path d="M1.5 2.5 H12.5 V6 H11.5 L11 4 H8 V15.5 L9.5 16 V17 H4.5 V16 L6 15.5 V4 H3 L2.5 6 H1.5Z" fill="#1f3654"/><rect x="0" y="1" width="1.5" height="4" fill="#555"/></svg><div class="t" style="left:66px">detail_info</div><div class="v"><svg width="7" height="7" viewBox="0 0 7 7" style="margin-right:1px;vertical-align:0px"><path d="M3.5 0 L7 3.5 L3.5 7 L0 3.5Z" fill="#f0f0f0"/></svg>0,0</div></div>
<div class="row" style="top:348px"><div class="cb"></div><div class="vl"></div><div class="ar" style="left:30px"></div><svg class="a" style="left:48px;top:3px" width="14" height="19" viewBox="0 0 14 19"><rect width="14" height="19" fill="#8ab4e8"/><path d="M1.5 2.5 H12.5 V6 H11.5 L11 4 H8 V15.5 L9.5 16 V17 H4.5 V16 L6 15.5 V4 H3 L2.5 6 H1.5Z" fill="#1f3654"/><rect x="0" y="1" width="1.5" height="4" fill="#555"/></svg><div class="t" style="left:66px">works_mobile</div><div class="v"><svg width="7" height="7" viewBox="0 0 7 7" style="margin-right:1px;vertical-align:0px"><path d="M0.5 0.5 L6 6" stroke="#f0f0f0" stroke-width="1"/><path d="M6.5 2.5 V6.5 H2.5Z" fill="#f0f0f0"/></svg>0,0</div></div>
<div class="row" style="top:372px"><div class="cb"></div><div class="vl"></div><div class="ar" style="left:30px"></div><svg class="a" style="left:48px;top:3px" width="14" height="19" viewBox="0 0 14 19"><rect width="14" height="19" fill="#8ab4e8"/><path d="M1.5 2.5 H12.5 V6 H11.5 L11 4 H8 V15.5 L9.5 16 V17 H4.5 V16 L6 15.5 V4 H3 L2.5 6 H1.5Z" fill="#1f3654"/><rect x="0" y="1" width="1.5" height="4" fill="#555"/></svg><div class="t" style="left:66px">biography_mobile</div><div class="v"><svg width="7" height="7" viewBox="0 0 7 7" style="margin-right:1px;vertical-align:0px"><path d="M0.5 0.5 L6 6" stroke="#f0f0f0" stroke-width="1"/><path d="M6.5 2.5 V6.5 H2.5Z" fill="#f0f0f0"/></svg>0,0</div></div>
<div class="row" style="top:396px"><div class="cb"></div><div class="vl"></div><div class="ar" style="left:30px"></div><svg class="a" style="left:48px;top:3px" width="14" height="19" viewBox="0 0 14 19"><rect width="14" height="19" fill="#8ab4e8"/><path d="M1.5 2.5 H12.5 V6 H11.5 L11 4 H8 V15.5 L9.5 16 V17 H4.5 V16 L6 15.5 V4 H3 L2.5 6 H1.5Z" fill="#1f3654"/><rect x="0" y="1" width="1.5" height="4" fill="#555"/></svg><div class="t" style="left:66px">info_mobile</div><div class="v"><svg width="7" height="7" viewBox="0 0 7 7" style="margin-right:1px;vertical-align:0px"><path d="M0.5 0.5 L6 6" stroke="#f0f0f0" stroke-width="1"/><path d="M6.5 2.5 V6.5 H2.5Z" fill="#f0f0f0"/></svg>0,0</div></div>
<div class="row" style="top:420px"><div class="cb"></div><div class="vl"></div><svg class="a" style="left:42px;top:2px" width="21" height="21" viewBox="0 0 21 21"><circle cx="10.5" cy="10.5" r="9.4" fill="none" stroke="#f4f4f4" stroke-width="1.5"/><path d="M7 7 L14 14 M14 7 L7 14" stroke="#f4f4f4" stroke-width="1.5"/></svg><div class="t" style="left:66px">close_works</div><div class="v"><svg width="7" height="7" viewBox="0 0 7 7" style="margin-right:1px;vertical-align:0px"><path d="M6.5 0.5 L1 6" stroke="#f0f0f0" stroke-width="1"/><path d="M0.5 2.5 V6.5 H4.5Z" fill="#f0f0f0"/></svg>8,7</div></div>
<div class="row" style="top:444px"><div class="cb"></div><div class="vl"></div><svg class="a" style="left:48px;top:3px" width="14" height="19" viewBox="0 0 14 19"><rect width="14" height="19" fill="#8ab4e8"/><path d="M1.5 2.5 H12.5 V6 H11.5 L11 4 H8 V15.5 L9.5 16 V17 H4.5 V16 L6 15.5 V4 H3 L2.5 6 H1.5Z" fill="#1f3654"/><rect x="0" y="1" width="1.5" height="4" fill="#555"/></svg><div class="t" style="left:66px">works</div><div class="v"><svg width="7" height="7" viewBox="0 0 7 7" style="margin-right:1px;vertical-align:0px"><path d="M0.5 0.5 L6 6" stroke="#f0f0f0" stroke-width="1"/><path d="M6.5 2.5 V6.5 H2.5Z" fill="#f0f0f0"/></svg>19.92%,24.90%</div></div>
<div class="row" style="top:468px"><div class="cb"></div><div class="vl"></div><svg class="a" style="left:42px;top:2px" width="21" height="21" viewBox="0 0 21 21"><circle cx="10.5" cy="10.5" r="9.4" fill="none" stroke="#f4f4f4" stroke-width="1.5"/><path d="M7 7 L14 14 M14 7 L7 14" stroke="#f4f4f4" stroke-width="1.5"/></svg><div class="t" style="left:66px">close_biography</div><div class="v"><svg width="7" height="7" viewBox="0 0 7 7" style="margin-right:1px;vertical-align:0px"><path d="M6.5 0.5 L1 6" stroke="#f0f0f0" stroke-width="1"/><path d="M0.5 2.5 V6.5 H4.5Z" fill="#f0f0f0"/></svg>8,7</div></div>
<div class="row" style="top:492px"><div class="cb"></div><div class="vl"></div><svg class="a" style="left:48px;top:3px" width="14" height="19" viewBox="0 0 14 19"><rect width="14" height="19" fill="#8ab4e8"/><path d="M1.5 2.5 H12.5 V6 H11.5 L11 4 H8 V15.5 L9.5 16 V17 H4.5 V16 L6 15.5 V4 H3 L2.5 6 H1.5Z" fill="#1f3654"/><rect x="0" y="1" width="1.5" height="4" fill="#555"/></svg><div class="t" style="left:66px">biography</div><div class="v"><svg width="7" height="7" viewBox="0 0 7 7" style="margin-right:1px;vertical-align:0px"><path d="M0.5 0.5 L6 6" stroke="#f0f0f0" stroke-width="1"/><path d="M6.5 2.5 V6.5 H2.5Z" fill="#f0f0f0"/></svg>19.92%,24.90%</div></div>
<div class="row" style="top:516px"><div class="cb"></div><div class="vl"></div><svg class="a" style="left:42px;top:2px" width="21" height="21" viewBox="0 0 21 21"><circle cx="10.5" cy="10.5" r="9.4" fill="none" stroke="#f4f4f4" stroke-width="1.5"/><path d="M7 7 L14 14 M14 7 L7 14" stroke="#f4f4f4" stroke-width="1.5"/></svg><div class="t" style="left:66px">close_info</div><div class="v"><svg width="7" height="7" viewBox="0 0 7 7" style="margin-right:1px;vertical-align:0px"><path d="M6.5 0.5 L1 6" stroke="#f0f0f0" stroke-width="1"/><path d="M0.5 2.5 V6.5 H4.5Z" fill="#f0f0f0"/></svg>8,7</div></div>
<div class="row" style="top:540px"><div class="cb"></div><div class="vl"></div><svg class="a" style="left:48px;top:3px" width="14" height="19" viewBox="0 0 14 19"><rect width="14" height="19" fill="#8ab4e8"/><path d="M1.5 2.5 H12.5 V6 H11.5 L11 4 H8 V15.5 L9.5 16 V17 H4.5 V16 L6 15.5 V4 H3 L2.5 6 H1.5Z" fill="#1f3654"/><rect x="0" y="1" width="1.5" height="4" fill="#555"/></svg><div class="t" style="left:66px">info</div><div class="v"><svg width="7" height="7" viewBox="0 0 7 7" style="margin-right:1px;vertical-align:0px"><path d="M0.5 0.5 L6 6" stroke="#f0f0f0" stroke-width="1"/><path d="M6.5 2.5 V6.5 H2.5Z" fill="#f0f0f0"/></svg>19.92%,24.90%</div></div>
<div class="row" style="top:564px"><div class="cb"></div><div class="vl"></div><div class="ar" style="left:30px"></div><svg class="a" style="left:48px;top:3px" width="14" height="19" viewBox="0 0 14 19"><rect width="14" height="19" fill="#8ab4e8"/><path d="M1.5 2.5 H12.5 V6 H11.5 L11 4 H8 V15.5 L9.5 16 V17 H4.5 V16 L6 15.5 V4 H3 L2.5 6 H1.5Z" fill="#1f3654"/><rect x="0" y="1" width="1.5" height="4" fill="#555"/></svg><div class="t" style="left:66px">info_text_mobile</div><div class="v"><svg width="7" height="7" viewBox="0 0 7 7" style="margin-right:1px;vertical-align:0px"><path d="M3.5 0 L7 3.5 L3.5 7 L0 3.5Z" fill="#f0f0f0"/></svg>0,0</div></div>
<div class="row" style="top:588px"><div class="cb"></div><div class="vl"></div><div class="ar" style="left:30px"></div><svg class="a" style="left:48px;top:3px" width="14" height="19" viewBox="0 0 14 19"><rect width="14" height="19" fill="#8ab4e8"/><path d="M1.5 2.5 H12.5 V6 H11.5 L11 4 H8 V15.5 L9.5 16 V17 H4.5 V16 L6 15.5 V4 H3 L2.5 6 H1.5Z" fill="#1f3654"/><rect x="0" y="1" width="1.5" height="4" fill="#555"/></svg><div class="t" style="left:66px">info_text_clickable_mobile</div><div class="v"><svg width="7" height="7" viewBox="0 0 7 7" style="margin-right:1px;vertical-align:0px"><path d="M3.5 0 L7 3.5 L3.5 7 L0 3.5Z" fill="#f0f0f0"/></svg>0,0</div></div>
<div class="row sel" style="top:612px"><div class="cb"><svg class="a" style="left:0.5px;top:2.5px" width="14" height="11" viewBox="0 0 14 11"><ellipse cx="7" cy="5.5" rx="6" ry="4" fill="none" stroke="#d4d4d4" stroke-width="1.1"/><circle cx="7" cy="5.2" r="2.6" fill="#cfcfcf"/><circle cx="7.6" cy="4.6" r="1" fill="#9a9a9a"/></svg></div><div class="vl"></div><div class="ar" style="left:30px"></div><svg class="a" style="left:44px;top:5px" width="18" height="14" viewBox="0 0 18 14"><rect x="0.5" y="0.5" width="17" height="13" rx="1.5" fill="#fdfdfd" stroke="#888" stroke-width="0.6"/></svg><div class="t" style="left:66px">loading_screen</div><div class="v"><svg width="7" height="7" viewBox="0 0 7 7" style="margin-right:1px;vertical-align:0px"><path d="M3.5 0 L7 3.5 L3.5 7 L0 3.5Z" fill="#f0f0f0"/></svg>0,0</div></div>
<div class="row" style="top:636px"><div class="cb"></div><div class="vl"></div><svg class="a" style="left:44px;top:5px" width="18" height="14" viewBox="0 0 18 14"><rect x="0.5" y="0.5" width="17" height="13" rx="1.5" fill="#fdfdfd" stroke="#888" stroke-width="0.6"/></svg><div class="t" style="left:66px">screen_tint_black</div><div class="v"><svg width="7" height="7" viewBox="0 0 7 7" style="margin-right:1px;vertical-align:0px"><path d="M0.5 0.5 L6 6" stroke="#f0f0f0" stroke-width="1"/><path d="M6.5 2.5 V6.5 H2.5Z" fill="#f0f0f0"/></svg>0,0</div></div>
<div class="row" style="top:660px"><div class="cb"></div><div class="vl"></div><svg class="a" style="left:48px;top:3px" width="14" height="19" viewBox="0 0 14 19"><rect width="14" height="19" fill="#8ab4e8"/><path d="M1.5 2.5 H12.5 V6 H11.5 L11 4 H8 V15.5 L9.5 16 V17 H4.5 V16 L6 15.5 V4 H3 L2.5 6 H1.5Z" fill="#1f3654"/><rect x="0" y="1" width="1.5" height="4" fill="#555"/></svg><div class="t" style="left:66px">show_biography_mobile</div><div class="v"><svg width="7" height="7" viewBox="0 0 7 7" style="margin-right:1px;vertical-align:0px"><path d="M6.5 0.5 L1 6" stroke="#f0f0f0" stroke-width="1"/><path d="M0.5 2.5 V6.5 H4.5Z" fill="#f0f0f0"/></svg>10,10</div></div>
<div class="row" style="top:684px"><div class="cb"></div><div class="vl"></div><svg class="a" style="left:48px;top:3px" width="14" height="19" viewBox="0 0 14 19"><rect width="14" height="19" fill="#8ab4e8"/><path d="M1.5 2.5 H12.5 V6 H11.5 L11 4 H8 V15.5 L9.5 16 V17 H4.5 V16 L6 15.5 V4 H3 L2.5 6 H1.5Z" fill="#1f3654"/><rect x="0" y="1" width="1.5" height="4" fill="#555"/></svg><div class="t" style="left:66px">show_works_mobile</div><div class="v"><svg width="7" height="7" viewBox="0 0 7 7" style="margin-right:1px;vertical-align:0px"><path d="M6.5 0.5 L1 6" stroke="#f0f0f0" stroke-width="1"/><path d="M0.5 2.5 V6.5 H4.5Z" fill="#f0f0f0"/></svg>150,10</div></div>
<div class="row" style="top:708px"><div class="cb"><svg class="a" style="left:0.5px;top:2.5px" width="14" height="11" viewBox="0 0 14 11"><ellipse cx="7" cy="5.5" rx="6" ry="4" fill="none" stroke="#d4d4d4" stroke-width="1.1"/><circle cx="7" cy="5.2" r="2.6" fill="#cfcfcf"/><circle cx="7.6" cy="4.6" r="1" fill="#9a9a9a"/></svg></div><div class="vl"></div><svg class="a" style="left:48px;top:3px" width="14" height="19" viewBox="0 0 14 19"><rect width="14" height="19" fill="#8ab4e8"/><path d="M1.5 2.5 H12.5 V6 H11.5 L11 4 H8 V15.5 L9.5 16 V17 H4.5 V16 L6 15.5 V4 H3 L2.5 6 H1.5Z" fill="#1f3654"/><rect x="0" y="1" width="1.5" height="4" fill="#555"/></svg><div class="t" style="left:66px">show_biography</div><div class="v"><svg width="7" height="7" viewBox="0 0 7 7" style="margin-right:1px;vertical-align:0px"><path d="M6.5 0.5 L1 6" stroke="#f0f0f0" stroke-width="1"/><path d="M0.5 2.5 V6.5 H4.5Z" fill="#f0f0f0"/></svg>10,5</div></div>
<div class="row" style="top:732px"><div class="cb"><svg class="a" style="left:0.5px;top:2.5px" width="14" height="11" viewBox="0 0 14 11"><ellipse cx="7" cy="5.5" rx="6" ry="4" fill="none" stroke="#d4d4d4" stroke-width="1.1"/><circle cx="7" cy="5.2" r="2.6" fill="#cfcfcf"/><circle cx="7.6" cy="4.6" r="1" fill="#9a9a9a"/></svg></div><div class="vl"></div><svg class="a" style="left:48px;top:3px" width="14" height="19" viewBox="0 0 14 19"><rect width="14" height="19" fill="#8ab4e8"/><path d="M1.5 2.5 H12.5 V6 H11.5 L11 4 H8 V15.5 L9.5 16 V17 H4.5 V16 L6 15.5 V4 H3 L2.5 6 H1.5Z" fill="#1f3654"/><rect x="0" y="1" width="1.5" height="4" fill="#555"/></svg><div class="t" style="left:66px">show_works</div><div class="v"><svg width="7" height="7" viewBox="0 0 7 7" style="margin-right:1px;vertical-align:0px"><path d="M6.5 0.5 L1 6" stroke="#f0f0f0" stroke-width="1"/><path d="M0.5 2.5 V6.5 H4.5Z" fill="#f0f0f0"/></svg>175,5</div></div>
<div class="row" style="top:756px"><div class="cb"><svg class="a" style="left:0.5px;top:2.5px" width="14" height="11" viewBox="0 0 14 11"><ellipse cx="7" cy="5.5" rx="6" ry="4" fill="none" stroke="#d4d4d4" stroke-width="1.1"/><circle cx="7" cy="5.2" r="2.6" fill="#cfcfcf"/><circle cx="7.6" cy="4.6" r="1" fill="#9a9a9a"/></svg></div><div class="vl"></div><div class="ar" style="left:30px"></div><svg class="a" style="left:42px;top:5px" width="21" height="15" viewBox="0 0 21 15"><path d="M0 1.5 Q0 0 1.5 0 H7 L9 2 H19.5 Q21 2 21 3.5 V13.5 Q21 15 19.5 15 H1.5 Q0 15 0 13.5Z" fill="#3f78c9"/><rect x="0" y="4" width="21" height="11" rx="1" fill="#5b93de"/><rect x="0" y="10" width="21" height="5" fill="#4c86d6"/></svg><div class="t" style="left:66px">map</div><div class="v"><svg width="7" height="7" viewBox="0 0 7 7" style="margin-right:1px;vertical-align:0px"><path d="M0.5 0.5 L6 6" stroke="#f0f0f0" stroke-width="1"/><path d="M6.5 2.5 V6.5 H2.5Z" fill="#f0f0f0"/></svg>5,5</div></div>
<div class="row" style="top:780px"><div class="cb"><svg class="a" style="left:0.5px;top:2.5px" width="14" height="11" viewBox="0 0 14 11"><ellipse cx="7" cy="5.5" rx="6" ry="4" fill="none" stroke="#d4d4d4" stroke-width="1.1"/><circle cx="7" cy="5.2" r="2.6" fill="#cfcfcf"/><circle cx="7.6" cy="4.6" r="1" fill="#9a9a9a"/></svg></div><div class="vl"></div><div class="ad" style="left:29px"></div><svg class="a" style="left:42px;top:2px" width="20" height="20" viewBox="0 0 20 20"><path d="M10 1 L12 6 L10 5 L8 6Z M10 19 L12 14 L10 15 L8 14Z M1 10 L6 8 L5 10 L6 12Z M19 10 L14 8 L15 10 L14 12Z" fill="#e8c040"/><circle cx="10" cy="10" r="7" fill="#fbf3d8" stroke="#e4b22c" stroke-width="1.6"/><path d="M10 3.5 V16.5 M3.5 10 H16.5" stroke="#e0a040" stroke-width="1"/><circle cx="10" cy="10" r="2.2" fill="#fff8e0" stroke="#e0a040" stroke-width=".9"/></svg><div class="t" style="left:66px">ht_vitrine4</div><div class="v"><svg width="7" height="7" viewBox="0 0 7 7" style="margin-right:1px;vertical-align:0px"><path d="M0.5 0.5 L6 6" stroke="#f0f0f0" stroke-width="1"/><path d="M6.5 2.5 V6.5 H2.5Z" fill="#f0f0f0"/></svg>100,87</div></div>
<div class="row" style="top:804px"><div class="cb"><svg class="a" style="left:0.5px;top:2.5px" width="14" height="11" viewBox="0 0 14 11"><ellipse cx="7" cy="5.5" rx="6" ry="4" fill="none" stroke="#d4d4d4" stroke-width="1.1"/><circle cx="7" cy="5.2" r="2.6" fill="#cfcfcf"/><circle cx="7.6" cy="4.6" r="1" fill="#9a9a9a"/></svg></div><div class="vl"></div><svg class="a" style="left:68px;top:3px" width="14" height="19" viewBox="0 0 14 19"><rect width="14" height="19" fill="#8ab4e8"/><path d="M1.5 2.5 H12.5 V6 H11.5 L11 4 H8 V15.5 L9.5 16 V17 H4.5 V16 L6 15.5 V4 H3 L2.5 6 H1.5Z" fill="#1f3654"/><rect x="0" y="1" width="1.5" height="4" fill="#555"/></svg><div class="t" style="left:86px">ht_info_text_v4</div><div class="v"><svg width="7" height="7" viewBox="0 0 7 7" style="margin-right:1px;vertical-align:0px"><path d="M0.5 0.5 L6 6" stroke="#f0f0f0" stroke-width="1"/><path d="M6.5 2.5 V6.5 H2.5Z" fill="#f0f0f0"/></svg>-100,-102</div></div>
<div class="row" style="top:828px"><div class="cb"><svg class="a" style="left:0.5px;top:2.5px" width="14" height="11" viewBox="0 0 14 11"><ellipse cx="7" cy="5.5" rx="6" ry="4" fill="none" stroke="#d4d4d4" stroke-width="1.1"/><circle cx="7" cy="5.2" r="2.6" fill="#cfcfcf"/><circle cx="7.6" cy="4.6" r="1" fill="#9a9a9a"/></svg></div><div class="vl"></div><div class="ar" style="left:50px"></div><svg class="a" style="left:64px;top:5px" width="18" height="14" viewBox="0 0 18 14"><rect x="0.5" y="0.5" width="17" height="13" rx="1.5" fill="#fdfdfd" stroke="#888" stroke-width="0.6"/></svg><div class="t" style="left:86px">circle</div><div class="v"><svg width="7" height="7" viewBox="0 0 7 7" style="margin-right:1px;vertical-align:0px"><path d="M0.5 0.5 L6 6" stroke="#f0f0f0" stroke-width="1"/><path d="M6.5 2.5 V6.5 H2.5Z" fill="#f0f0f0"/></svg>-27,-26</div></div>
</div>
<div class="a" style="left:428px;top:134px;width:14px;height:851px;background:#3b3b3b"></div>
<div class="sb" style="left:428px;top:134px"><div class="a" style="left:2px;top:4px;border-left:4px solid transparent;border-right:4px solid transparent;border-bottom:4px solid #ddd"></div></div>
<div class="sb" style="left:428px;top:971px"><div class="a" style="left:2px;top:4px;border-left:4px solid transparent;border-right:4px solid transparent;border-top:4px solid #ddd"></div></div>
<div class="a" style="left:428px;top:334px;width:14px;height:377px;background:#454545;border:1px solid #4e4e4e;border-top-color:#2c2c2c"></div>

<!-- canvas -->
<div class="a" style="left:472px;top:134px;width:781px;height:851px;background:#a0a0a0"></div>
<div class="a" style="left:472px;top:134px;width:640px;height:480px;background-color:#fff;background-image:linear-gradient(90deg,rgba(150,150,150,.36) 2px,transparent 2px),linear-gradient(rgba(140,140,140,.45) 1.5px,transparent 1.5px);background-size:5px 5px"></div>
<div class="a" style="left:472px;top:134px;width:640px;height:480px;overflow:hidden">
<div style="position:absolute;left:-472px;top:-134px;width:1920px;height:1040px">
  <!-- floor plan gray base -->
  <div class="a" style="left:476px;top:139px;width:380px;height:199px;background:#7b7b7b;border:1px solid #fafafa"></div>
  <div class="a" style="left:477px;top:140px;width:378px;height:197px;background-image:linear-gradient(90deg,rgba(255,255,255,.08) 1px,transparent 1px),linear-gradient(rgba(255,255,255,.08) 1px,transparent 1px);background-size:5px 5px;background-position:0 0"></div>
  <div class="a" style="left:477px;top:140px;width:193px;height:11px;background:rgba(255,255,255,.08);overflow:hidden"><span class="a" style="left:30px;top:-3px;font-size:14.3px;color:rgba(120,120,150,.35);white-space:nowrap">&lt;p class="hotspot</span></div>
  <div class="a" style="left:472px;top:134px;width:198px;height:5px;background:#8d8fb8"></div>
  <!-- lavender outer -->
  <div class="a" style="left:488px;top:151px;width:357px;height:175px;background:#a3a9d2"></div>
  <div class="a" style="left:494px;top:157px;width:344px;height:162px;background-color:#7b7b7b;background-image:linear-gradient(90deg,rgba(255,255,255,.08) 1px,transparent 1px),linear-gradient(rgba(255,255,255,.08) 1px,transparent 1px);background-size:5px 5px;background-position:-2px -3px"></div>
  <!-- shelves room -->
  <div class="a" style="left:494px;top:157px;width:160px;height:50px;background:#a2a9d0"></div>
  <div class="a" style="left:497px;top:159px;width:155px;height:48px;border:1.5px solid #050505;border-bottom-width:2.5px;background:#a9b0d8"></div>
  <div class="a" style="left:497px;top:182px;width:155px;height:3.5px;background:#050505"></div>
  <div class="a" style="left:547px;top:159px;width:1.6px;height:48px;background:#050505"></div>
  <div class="a" style="left:599px;top:159px;width:1.6px;height:48px;background:#050505"></div>
  <div class="a" style="left:519px;top:206px;width:4px;height:3px;border-radius:2px;background:#050505"></div>
  <div class="a" style="left:573px;top:206px;width:4px;height:3px;border-radius:2px;background:#050505"></div>
  <div class="a" style="left:627px;top:206px;width:4px;height:3px;border-radius:2px;background:#050505"></div>
  <!-- gauge ghost -->
  <svg class="a" style="left:545px;top:205px" width="70" height="16" viewBox="0 0 70 16"><path d="M15 16 A22 22 0 0 1 55 16" fill="#9a9a9a" stroke="#6e6e6e" stroke-width="3"/><path d="M10 16 L12 2 M60 16 L58 2" stroke="#c9a050" stroke-width="2" opacity=".7"/><circle cx="35" cy="10" r="2" fill="#666"/></svg>
  <!-- top-right room -->
  <div class="a" style="left:653px;top:158px;width:107px;height:61px;background:#a3abd3"></div>
  <div class="a" style="left:661px;top:160px;width:12px;height:12px;border-radius:50%;background:#0a0a14"></div>
  <div class="a" style="left:736px;top:161px;width:20px;height:20px;background:#fbfbfb;border-top:3px solid #000"></div>
  <div class="a" style="left:763px;top:160px;width:19px;height:20px;background:#a3abd3;border-radius:0 0 5px 5px"></div>
  <div class="a" style="left:787px;top:163px;width:19px;height:17px;background:#a3abd3;border-radius:0 0 5px 5px"></div>
  <div class="a" style="left:816px;top:164px;width:20px;height:17px;background:#a3abd3"></div>
  <!-- light floor -->
  <div class="a" style="left:496px;top:220px;width:341px;height:53px;background:#cdcdcd"></div>
  <div class="a" style="left:499px;top:226px;width:23px;height:23px;background:#a6acd6"></div>
  <div class="a" style="left:499px;top:258px;width:23px;height:16px;background:#a6acd6"></div>
  <div class="a" style="left:489px;top:227px;width:5px;height:79px;background:#fafafa"></div>
  <!-- poles -->
  <div class="a" style="left:536px;top:231px;width:2px;height:24px;background:#222"></div>
  <div class="a" style="left:533px;top:234px;width:25px;height:1.5px;background:#222"></div>
  <div class="a" style="left:626px;top:231px;width:2px;height:24px;background:#222"></div>
  <div class="a" style="left:623px;top:234px;width:25px;height:1.5px;background:#222"></div>
  <div class="a" style="left:721px;top:230px;width:2px;height:24px;background:#222"></div>
  <div class="a" style="left:721px;top:234px;width:21px;height:1.5px;background:#222"></div>
  <!-- chair -->
  <svg class="a" style="left:691px;top:223px" width="30" height="31" viewBox="0 0 30 31"><path d="M5 8 Q5 1 15 1 Q25 1 25 8 L27 10 Q29 11 29 14 L29 22 Q29 25 26 24 L24 24 Q20 27 15 26 Q10 27 6 24 L4 24 Q1 25 1 22 L1 14 Q1 11 3 10Z" fill="#000"/><path d="M5 25 Q15 31 25 25 L25 27 Q15 32 5 27Z" fill="#000"/></svg>
  <!-- persons -->
  <svg class="a" style="left:547px;top:237px" width="17" height="33" viewBox="0 0 17 33"><path d="M3 9 Q3 7 5 7 L12 7 Q14 7 14 9 L15 19 Q16 21 14 21 L12.5 21 L12.5 32 L9 32 L8.5 22 L8 32 L4.5 32 L4.5 21 L3 21 Q1 21 2 19Z" fill="#b35a10" transform="translate(1.2,0.6)"/><circle cx="8.5" cy="3.8" r="3.3" fill="#f6f000" stroke="#8a7a00" stroke-width=".8"/><path d="M3 9 Q3 7 5 7 L12 7 Q14 7 14 9 L15 19 Q16 21 14 21 L12.5 21 L12.5 32 L9 32 L8.5 22 L8 32 L4.5 32 L4.5 21 L3 21 Q1 21 2 19Z" fill="#f6f000" stroke="#8a7a00" stroke-width=".8"/></svg><svg class="a" style="left:637px;top:237px" width="17" height="33" viewBox="0 0 17 33"><path d="M3 9 Q3 7 5 7 L12 7 Q14 7 14 9 L15 19 Q16 21 14 21 L12.5 21 L12.5 32 L9 32 L8.5 22 L8 32 L4.5 32 L4.5 21 L3 21 Q1 21 2 19Z" fill="#b35a10" transform="translate(1.2,0.6)"/><circle cx="8.5" cy="3.8" r="3.3" fill="#f6f000" stroke="#8a7a00" stroke-width=".8"/><path d="M3 9 Q3 7 5 7 L12 7 Q14 7 14 9 L15 19 Q16 21 14 21 L12.5 21 L12.5 32 L9 32 L8.5 22 L8 32 L4.5 32 L4.5 21 L3 21 Q1 21 2 19Z" fill="#f6f000" stroke="#8a7a00" stroke-width=".8"/></svg><svg class="a" style="left:732px;top:237px" width="17" height="33" viewBox="0 0 17 33"><path d="M3 9 Q3 7 5 7 L12 7 Q14 7 14 9 L15 19 Q16 21 14 21 L12.5 21 L12.5 32 L9 32 L8.5 22 L8 32 L4.5 32 L4.5 21 L3 21 Q1 21 2 19Z" fill="#b35a10" transform="translate(1.2,0.6)"/><circle cx="8.5" cy="3.8" r="3.3" fill="#f6f000" stroke="#8a7a00" stroke-width=".8"/><path d="M3 9 Q3 7 5 7 L12 7 Q14 7 14 9 L15 19 Q16 21 14 21 L12.5 21 L12.5 32 L9 32 L8.5 22 L8 32 L4.5 32 L4.5 21 L3 21 Q1 21 2 19Z" fill="#f6f000" stroke="#8a7a00" stroke-width=".8"/></svg>
  <!-- bottom section -->
  <div class="a" style="left:494px;top:293px;width:173px;height:27px;background:#a3aad2;border-bottom:1.5px solid #6d6d78"></div>
  <div class="a" style="left:563px;top:293px;width:1.5px;height:26px;background:#7b7b86"></div>
  <div class="a" style="left:632px;top:293px;width:1.5px;height:26px;background:#7b7b86"></div>
  <!-- purple circle -->
  <svg class="a" style="left:466px;top:129px" width="70" height="70" viewBox="0 0 70 70"><circle cx="32" cy="32" r="27.5" fill="none" stroke="#6a6ca6" stroke-width="1.8"/></svg>
  <div class="a" style="left:491px;top:133px;width:9px;height:9px;border-radius:50%;background:#fff"></div>
  <div class="a" style="left:527px;top:161px;width:0;height:30px;border-left:1px dotted #333"></div>
  <div class="a" style="left:505px;top:190px;width:22px;height:0;border-top:1px dotted #333"></div>
  <div class="a" style="left:472px;top:189px;width:18px;height:1px;background:#333"></div>
  <!-- marker-hint label -->
  <div class="hl" style="left:472px;top:274px;width:194px;height:19px"><span class="a" style="left:-5px;top:2px">&lt;p class="marker-hint"&gt;У окк&lt;p</span></div>
  <!-- dashed line below plan -->
  <div class="a" style="left:477px;top:344px;width:190px;height:0;border-top:1px dashed #444"></div>
  <!-- hotspot labels -->
  <div class="hl" style="left:785px;top:139px;width:150px;height:24px"><span class="a" style="left:3px;top:4px">&lt;p class="hotspot-title"</span></div>
  <div class="hl" style="left:951px;top:139px;width:150px;height:24px"><span class="a" style="left:3px;top:4px">&lt;p class="hotspot-title"</span></div>
  <div class="hl" style="left:482px;top:354px;width:149px;height:24px"><span class="a" style="left:3px;top:4px">&lt;p class="hotspot-title"</span></div>
  <svg class="a" style="left:1072px;top:141px" width="30" height="30" viewBox="0 0 30 30"><circle cx="15" cy="15" r="12.5" fill="none" stroke="#fff" stroke-width="2"/><path d="M9.5 9.5 L20.5 20.5 M20.5 9.5 L9.5 20.5" stroke="#fff" stroke-width="2"/></svg>
  <!-- popup -->
  <div class="a" style="left:667px;top:274px;width:248px;height:198px;background-color:#7d7d7d;background-image:linear-gradient(90deg,rgba(255,255,255,.08) 1px,transparent 1px),linear-gradient(rgba(255,255,255,.08) 1px,transparent 1px);background-size:5px 5px;border-top:2px solid #f4f4f4;border-left:1.5px solid #f4f4f4"></div>
  <div class="a" style="left:669px;top:276px;width:165px;height:9px;background:rgba(95,95,150,.28);overflow:hidden"><span class="a" style="left:-195px;top:-2px;font-size:14.3px;color:rgba(255,255,255,.18);white-space:nowrap">&lt;p class="marker-hint"&gt;У окк&lt;p class="marker-hint"&gt;У</span></div>
  <svg class="a" style="left:677px;top:284px" width="229" height="150" viewBox="0 0 229 150">
  <defs>
    <linearGradient id="cur" x1="0" x2="1" y1="0" y2="0"><stop offset="0" stop-color="#7a6458"/><stop offset=".25" stop-color="#4e3628"/><stop offset=".5" stop-color="#6a4e3e"/><stop offset=".75" stop-color="#4a3426"/><stop offset="1" stop-color="#5e4434"/></linearGradient>
    <pattern id="rug" width="7" height="7" patternUnits="userSpaceOnUse"><rect width="7" height="7" fill="#6e6058"/><circle cx="2" cy="2" r="1.6" fill="#9a8a80"/><circle cx="5.5" cy="5" r="1.3" fill="#4a3c34"/><circle cx="5.5" cy="1.5" r=".8" fill="#8a7a72"/></pattern>
    <linearGradient id="wall" x1="0" x2="1"><stop offset="0" stop-color="#d0c9c6"/><stop offset="1" stop-color="#ddd9da"/></linearGradient>
    <linearGradient id="desk" x1="0" x2="1"><stop offset="0" stop-color="#b88032"/><stop offset="1" stop-color="#cf9a44"/></linearGradient>
  </defs>
  <rect width="229" height="150" fill="url(#wall)"/>
  <rect x="33" y="0" width="15" height="70" fill="#c4bcb4"/>
  <rect x="0" y="0" width="36" height="64" fill="url(#cur)"/>
  <!-- bookshelf -->
  <rect x="46" y="0" width="73" height="50" fill="#a06a2a"/>
  <rect x="49" y="1" width="14" height="9" fill="#4a5048"/><rect x="49" y="12" width="14" height="10" fill="#3e5a5a"/><rect x="49" y="24" width="14" height="9" fill="#8a7a68"/><rect x="49" y="35" width="14" height="10" fill="#5a4a3a"/>
  <rect x="65" y="1" width="16" height="9" fill="#8a6a50"/><rect x="65" y="12" width="16" height="10" fill="#b8a890"/><rect x="65" y="24" width="16" height="9" fill="#6a3a2a"/><rect x="65" y="35" width="16" height="10" fill="#c8c8d0"/>
  <rect x="84" y="1" width="18" height="9" fill="#c8bcac"/><rect x="84" y="12" width="18" height="10" fill="#b8ac9c"/><rect x="84" y="24" width="18" height="9" fill="#a89888"/><rect x="84" y="35" width="18" height="10" fill="#7a5a48"/>
  <rect x="104" y="0" width="15" height="50" fill="#b27a2e"/>
  <!-- lower cabinet -->
  <rect x="36" y="46" width="44" height="26" fill="#7a5226"/>
  <rect x="36" y="46" width="44" height="3" fill="#9a6a30"/>
  <!-- armchair -->
  <path d="M0 44 L20 44 L30 62 L30 78 L0 78Z" fill="#6a3a2c"/>
  <path d="M0 62 L32 60 L32 70 L0 72Z" fill="#843a2e"/>
  <!-- floor -->
  <path d="M60 90 L229 112 L229 150 L140 150Z" fill="#b27a44"/>
  <path d="M202 114 L229 120 L229 125 L202 119Z" fill="#c09a76"/>
  <!-- rug -->
  <path d="M0 76 L40 74 L66 92 L104 106 L152 150 L0 150Z" fill="url(#rug)"/>
  <!-- desk -->
  <path d="M72 57 L150 73 L202 64 L202 118 L158 142 L122 128 L122 86 L72 74Z" fill="url(#desk)"/>
  <path d="M150 73 L202 64 L202 118 L158 142Z" fill="#c28c3a"/>
  <path d="M122 84 L150 90 L158 142 L122 128Z" fill="#b88234"/>
  <path d="M150 92 L202 82 L202 85 L150 95Z" fill="#d8a452"/>
  <path d="M72 54 L128 51 L202 61 L150 72Z" fill="#4e4036"/>
  <path d="M72 56 L150 72 L202 62 L202 66 L150 77 L72 60Z" fill="#d8a24a"/>
  <path d="M150 140 L164 140 L164 148 L150 148Z" fill="#9a6428"/>
  <!-- papers / lamp -->
  <path d="M108 52 L130 53 L134 58 L112 58Z" fill="#eeeae0"/>
  <path d="M122 47 L140 46 L142 51 L124 52Z" fill="#d8d0a8"/>
  <rect x="142" y="38" width="7" height="9" fill="#d23a2a"/>
  <path d="M113 20 L126 20 L130 33 L109 33Z" fill="#6fc6c4"/>
  <rect x="118" y="33" width="3" height="15" fill="#5aaaa8"/>
  <!-- typewriter -->
  <path d="M167 28 L196 27 L202 34 L202 61 L167 60Z" fill="#222426"/>
  <path d="M148 53 L168 46 L190 48 L190 64 L152 66 L146 62Z" fill="#2a2c30"/>
  <!-- chair -->
  <path d="M29 64 L36 58 L62 74 L106 82 L108 104 L88 112 L58 104 L40 86Z" fill="#1c2026"/>
  <path d="M62 74 L106 82 L108 90 L70 84Z" fill="#2c3038"/>
  <path d="M76 110 L78 124 M78 124 L60 136 M78 124 L100 132 M78 124 L84 142" stroke="#8a8a8a" stroke-width="1.6"/>
</svg>

  <div class="a" style="left:672px;top:440px;width:238px;height:27px;border:2px solid #f01010;background:#6c6d8e"></div>
  <div class="a" style="left:672px;top:440px;width:26px;height:5px;background:#f01010"></div>
  <div class="a" style="left:672px;top:440px;width:5px;height:27px;background:#f01010"></div>
  <div class="a" style="left:672px;top:462px;width:26px;height:5px;background:#f01010"></div>
  <div class="a" style="left:884px;top:440px;width:26px;height:5px;background:#f01010"></div>
  <div class="a" style="left:905px;top:440px;width:5px;height:27px;background:#f01010"></div>
  <div class="a" style="left:884px;top:462px;width:26px;height:5px;background:#f01010"></div>
  <div class="a" style="left:677px;top:446px;width:227px;height:16px;background:#575b8c;color:#f4f4f4;font-size:14.3px;white-space:nowrap"><span class="a" style="left:22px;top:-1px">&lt;p class="loading"&gt;$p%&lt;/p&gt;</span></div>
</div>
</div>


<!-- properties -->
<div class="hdr" style="top:143px"><i class="d"></i><span>Position</span></div>
<div class="pl" style="left:1301px;top:189px">ID:</div>
<div class="inp" style="left:1387px;top:185px;width:490px;background:#5e5e5e;padding-left:3px;font-size:11.9px">loading_text</div>
<div class="pl" style="left:1301px;top:219px">Position:</div>
<svg class="a" style="left:1353px;top:218px" width="18" height="16" viewBox="0 0 18 16"><path d="M0 8 H5 Q8 8 10 4 L13 1 M10 12 L13 15 M5 8 Q8 8 10 12" fill="none" stroke="#d0d0d0" stroke-width="1.5"/><path d="M11 0.5 L15.5 0.5 L15.5 5" fill="none" stroke="#d0d0d0" stroke-width="1.5"/><path d="M11 15.5 L15.5 15.5 L15.5 11" fill="none" stroke="#d0d0d0" stroke-width="1.5"/></svg>
<div class="pl" style="left:1387px;top:219px">X:</div>
<svg class="a" style="left:1412px;top:219px" width="16" height="13" viewBox="0 0 16 13"><path d="M1 0 V13" stroke="#d8d8d8" stroke-width="1.6"/><path d="M4 6.5 H14 M10 2.5 L14.5 6.5 L10 10.5" fill="none" stroke="#d8d8d8" stroke-width="1.6"/></svg>
<div class="inp" style="left:1435px;top:215px;width:47px">9</div>
<div class="spin" style="left:1482px;top:215px;width:15px;background:#3e3e3e"><div class="a" style="left:4px;top:4px;border-left:3.5px solid transparent;border-right:3.5px solid transparent;border-bottom:4px solid #ccc"></div><div class="a" style="left:4px;top:12px;border-left:3.5px solid transparent;border-right:3.5px solid transparent;border-top:4px solid #ccc"></div></div>
<div class="combo" style="left:1505px;top:215px;width:67px">Pixels</div>
<div class="pl" style="left:1387px;top:250px">Y:</div>
<svg class="a" style="left:1413px;top:249px" width="14" height="15" viewBox="0 0 14 15"><path d="M0 1 H14" stroke="#d8d8d8" stroke-width="1.6"/><path d="M7 3 V13 M3 9.5 L7 13.5 L11 9.5" fill="none" stroke="#d8d8d8" stroke-width="1.6"/></svg>
<div class="inp" style="left:1435px;top:247px;width:47px">169</div>
<div class="spin" style="left:1482px;top:247px;width:15px;background:#3e3e3e"><div class="a" style="left:4px;top:4px;border-left:3.5px solid transparent;border-right:3.5px solid transparent;border-bottom:4px solid #ccc"></div><div class="a" style="left:4px;top:12px;border-left:3.5px solid transparent;border-right:3.5px solid transparent;border-top:4px solid #ccc"></div></div>
<div class="combo" style="left:1505px;top:246px;width:67px">Pixels</div>
<div class="pl" style="left:1387px;top:285px">Anchor:</div>
<div class="a" style="left:1434px;top:280px;width:24px;height:24px;background:linear-gradient(#fff,#fff) 0 0/7px 7px no-repeat,repeating-linear-gradient(90deg,#9c9c9c 0 7px,transparent 7px 8.5px),#353535"></div>
<div class="a" style="left:1434px;top:287px;width:24px;height:1.5px;background:#353535"></div>
<div class="a" style="left:1434px;top:295px;width:24px;height:1.5px;background:#353535"></div>
<div class="pl" style="left:1301px;top:323px">Size:</div>
<svg class="a" style="left:1353px;top:322px" width="18" height="16" viewBox="0 0 18 16"><path d="M0 8 H5 Q8 8 10 4 L13 1 M10 12 L13 15 M5 8 Q8 8 10 12" fill="none" stroke="#d0d0d0" stroke-width="1.5"/><path d="M11 0.5 L15.5 0.5 L15.5 5" fill="none" stroke="#d0d0d0" stroke-width="1.5"/><path d="M11 15.5 L15.5 15.5 L15.5 11" fill="none" stroke="#d0d0d0" stroke-width="1.5"/></svg>
<div class="pl" style="left:1387px;top:323px">Width:</div>
<div class="inp" style="left:1435px;top:320px;width:43px">230</div>
<div class="spin" style="left:1478px;top:320px;width:15px;background:#3e3e3e"><div class="a" style="left:4px;top:4px;border-left:3.5px solid transparent;border-right:3.5px solid transparent;border-bottom:4px solid #ccc"></div><div class="a" style="left:4px;top:12px;border-left:3.5px solid transparent;border-right:3.5px solid transparent;border-top:4px solid #ccc"></div></div>
<div class="combo" style="left:1501px;top:319px;width:67px">Pixels</div>
<svg class="a" style="left:1580px;top:321px" width="18" height="17" viewBox="0 0 18 17"><rect x="8" y="1" width="9" height="5.5" rx="2.7" transform="rotate(-40 12.5 3.75)" fill="none" stroke="#bdbdbd" stroke-width="2"/><rect x="1" y="10" width="9" height="5.5" rx="2.7" transform="rotate(-40 5.5 12.75)" fill="none" stroke="#bdbdbd" stroke-width="2"/><path d="M6 11 L12 6" stroke="#bdbdbd" stroke-width="2"/></svg>
<div class="pl" style="left:1387px;top:355px">Height:</div>
<div class="inp" style="left:1435px;top:351px;width:43px">20</div>
<div class="spin" style="left:1478px;top:351px;width:15px;background:#3e3e3e"><div class="a" style="left:4px;top:4px;border-left:3.5px solid transparent;border-right:3.5px solid transparent;border-bottom:4px solid #ccc"></div><div class="a" style="left:4px;top:12px;border-left:3.5px solid transparent;border-right:3.5px solid transparent;border-top:4px solid #ccc"></div></div>
<div class="combo" style="left:1501px;top:350px;width:67px">Pixels</div>
<div class="a" style="left:1266px;top:543px;width:3px;height:20px;background:repeating-linear-gradient(#777 0 1px,transparent 1px 3px)"></div>
<div class="a" style="left:455px;top:543px;width:3px;height:20px;background:repeating-linear-gradient(#777 0 1px,transparent 1px 3px)"></div>

<div class="hdr" style="top:388px"><i></i><span>Appearance</span></div>
<div class="hdr" style="top:419px"><i></i><span>Rectangle</span></div>
<div class="hdr" style="top:450px"><i></i><span>Text</span></div>
<div class="hdr" style="top:481px"><i></i><span>Accessibility</span></div>
<div class="hdr" style="top:512px"><i></i><span>Advanced</span></div>
<div class="hdr" style="top:543px"><i class="d"></i><span>Actions</span></div>
<div class="tbl" style="top:576px"><div class="h"></div><div class="c" style="left:141px"></div><div class="c" style="left:281px"></div><div class="c" style="left:421px"></div>
  <div class="ht" style="left:1px">Source</div><div class="ht" style="left:141px">Action</div><div class="ht" style="left:281px">Parameters</div><div class="ht" style="left:421px">Target</div></div>
<div class="plus" style="top:600px"></div>
<div class="hdr" style="top:634px"><i class="d"></i><span>Modifiers</span></div>
<div class="tbl" style="top:667px"><div class="h"></div><div class="c" style="left:141px"></div><div class="c" style="left:281px"></div><div class="c" style="left:421px"></div>
  <div class="ht" style="left:1px">Target</div><div class="ht" style="left:141px">Source</div><div class="ht" style="left:281px">Factor</div><div class="ht" style="left:421px">Offset</div></div>
<div class="plus" style="top:691px"></div>
<div class="hdr" style="top:725px"><i></i><span>Notes</span></div>

<div class="a" style="left:1830px;top:1007px;width:78px;height:23px;background:#3a3a3a;border:1px solid #4a4a4a;font-size:12px;color:#e8e8e8;text-align:center;padding-top:4px">Close</div>

</body></html>
